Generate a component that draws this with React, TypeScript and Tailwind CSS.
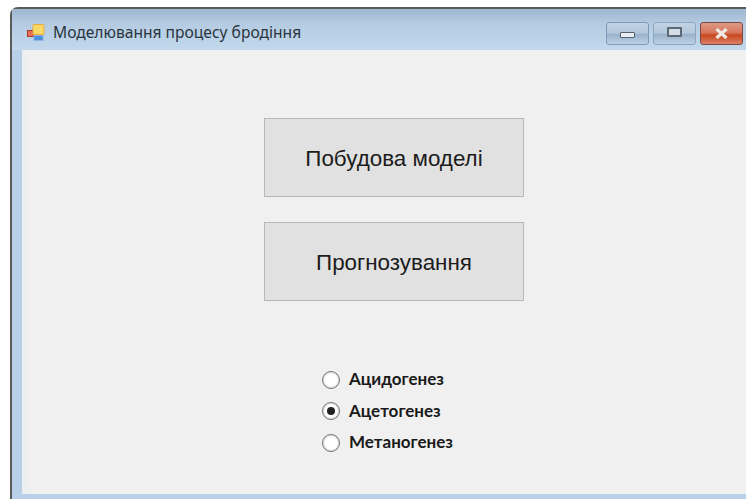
const options = [
  { label: "Ацидогенез", checked: false },
  { label: "Ацетогенез", checked: true },
  { label: "Метаногенез", checked: false },
];

function AppIcon() {
  return (
    <svg width="18" height="18" viewBox="0 0 18 18" className="shrink-0">
      <rect x="0.5" y="6.5" width="6" height="6" fill="#e8705a" stroke="#a83c28" />
      <rect x="6" y="0.5" width="11" height="10" rx="1" fill="#f8d866" stroke="#e6ad3c" />
      <rect x="7" y="11.5" width="9" height="5" fill="#4c8fdc" stroke="#8ab4e4" />
    </svg>
  );
}

function CaptionButtons() {
  return (
    <div className="flex gap-[4px]">
      <div className="flex h-[23px] w-[43px] items-end justify-center rounded-[3px] border border-[#7d9bb8] bg-[linear-gradient(#c2d3e4_0%,#b3c8dc_48%,#9ab2ca_55%,#bdd1e4_100%)] pb-[6px]">
        <div className="h-[6px] w-[15px] rounded-[1px] border border-[#56616e] bg-[#e8eef4]" />
      </div>
      <div className="flex h-[23px] w-[43px] items-center justify-center rounded-[3px] border border-[#8ba7c2] bg-[linear-gradient(#c2d3e4_0%,#b3c8dc_48%,#9ab2ca_55%,#bdd1e4_100%)]">
        <div className="mb-[2px] h-[10px] w-[15px] rounded-[1px] border-2 border-[#5e6874] bg-[#d4dee8]" />
      </div>
      <div className="flex h-[23px] w-[43px] items-center justify-center rounded-[3px] border border-[#7a4a44] bg-[linear-gradient(#dd9a86_0%,#d8765e_45%,#c8481f_58%,#dc8068_100%)]">
        <svg width="15" height="11" viewBox="0 0 15 11">
          <path d="M2.5 1 L12.5 10 M12.5 1 L2.5 10" stroke="#eeeae6" strokeWidth="3.2" fill="none" />
        </svg>
      </div>
    </div>
  );
}

function ActionButton({ label }: { label: string }) {
  return (
    <button className="h-[79px] w-[260px] border border-[#b8b8b8] bg-[#e1e1e1] pt-[2px] font-['Liberation_Sans',sans-serif] text-[22.4px] text-[#1c1c1c]">
      {label}
    </button>
  );
}

function Radio({ label, checked }: { label: string; checked: boolean }) {
  return (
    <label className="flex h-[31.5px] items-center gap-[9px]">
      <span className="flex size-[18px] items-center justify-center rounded-full border border-[#757575] bg-white shadow-[inset_0_0_2px_#999999]">
        {checked && <span className="size-[8px] rounded-full bg-[#222222]" />}
      </span>
      <span className="pb-[2px] font-['Lato',sans-serif] text-[17px] font-bold text-[#1a1a1a]">{label}</span>
    </label>
  );
}

export default function App() {
  return (
    <div className="flex h-[499px] w-[746px] overflow-hidden bg-white pl-[10px] pt-[7px]">
      <div className="flex flex-1 flex-col rounded-tl-lg border-l-2 border-t-2 border-[#5a5a5a] bg-[#b9d1e8] pb-[5px]">
        <div className="flex h-[41px] shrink-0 items-center bg-[linear-gradient(#9db6cf_0%,#b4cbe1_35%,#c2d8ec_100%)] pl-[15px] pr-[3px] pt-[7px]">
          <AppIcon />
          <span className="ml-[8px] flex-1 font-['Noto_Sans',sans-serif] text-[15.6px] text-[#2a3540]">
            Моделювання процесу бродіння
          </span>
          <CaptionButtons />
        </div>

        <div className="ml-[10px] flex flex-1 flex-col border-l-4 border-[#eaf0f2] bg-[#f0f0f0] pt-[68px]">
          <div className="ml-[238px] flex w-[260px] flex-col gap-[25px]">
            <ActionButton label="Побудова моделі" />
            <ActionButton label="Прогнозування" />
          </div>
          <div className="ml-[296px] mt-[63px] flex flex-col">
            {options.map((option) => (
              <Radio key={option.label} label={option.label} checked={option.checked} />
            ))}
          </div>
        </div>
      </div>
    </div>
  );
}
